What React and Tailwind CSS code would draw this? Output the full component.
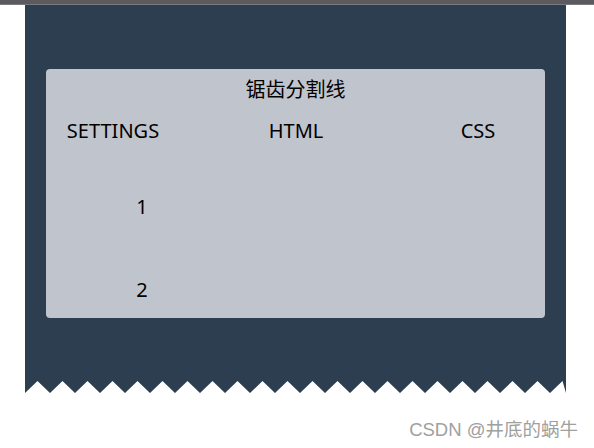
import React from "react";

const PANEL_W = 541;
const TOOTH = 25;
const TOOTH_H = 12;

// zigzag edge at the bottom of the dark panel
const Zigzag = () => {
  const pts = [[0, 0]];
  for (let x = 0; x <= PANEL_W + TOOTH; x += TOOTH) {
    pts.push([x, TOOTH_H]);
    pts.push([x + TOOTH / 2, 0]);
  }
  pts.push([PANEL_W, 0]);
  const d = pts.map(([x, y]) => `${Math.min(x, PANEL_W)},${y}`).join(" ");
  return (
    <svg width={PANEL_W} height={TOOTH_H} className="block">
      <polygon points={d} fill="#2c3e50" />
    </svg>
  );
};

export default function App() {
  return (
    <div
      className="w-[594px] h-[448px] bg-white overflow-hidden flex flex-col"
      style={{ fontFamily: '"Noto Sans", "Noto Sans CJK SC", sans-serif' }}
    >
      <div className="h-[5px] bg-[#5a5a5f] border-b border-[#7a7a7e]" />
      <div className="ml-[25px] w-[541px] flex flex-col">
        <div className="bg-[#2c3e50] pt-[64px] pb-[63px] px-[21px]">
          <div className="h-[249px] rounded bg-[#c0c4cc] text-[20px] text-black leading-[24px] flex flex-col">
            <div className="pt-[9px] text-center">锯齿分割线</div>
            <div className="flex mt-[17px]">
              <div className="w-[134px] text-center">SETTINGS</div>
              <div className="w-[232px] text-center">HTML</div>
              <div className="w-[132px] text-center">CSS</div>
            </div>
            <div className="flex mt-[52px]">
              <div className="w-[192px] text-center">1</div>
            </div>
            <div className="flex mt-[59px]">
              <div className="w-[192px] text-center">2</div>
            </div>
          </div>
        </div>
        <Zigzag />
      </div>
      <div
        className="mt-[26px] pr-[16px] text-right text-[18.5px] text-[#a0a0a0] leading-[22px]"
        style={{ fontFamily: '"Liberation Sans", "Noto Sans CJK SC", sans-serif' }}
      >
        CSDN @井底的蜗牛
      </div>
    </div>
  );
}
